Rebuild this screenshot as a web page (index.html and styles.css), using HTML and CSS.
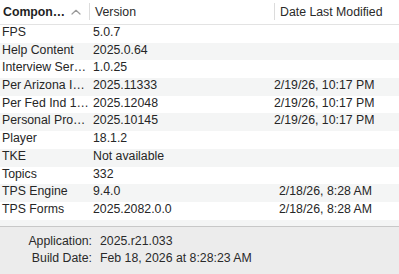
FILE: index.html
```html
<!DOCTYPE html>
<html>
<head>
<meta charset="utf-8">
<link rel="stylesheet" href="styles.css">
</head>
<body>
<div class="window">
  <div class="table">
    <div class="head">
      <div class="hcell first"><span class="hlabel bold">Compon…</span><svg class="chev" width="10" height="6" viewBox="0 0 10 6"><path d="M1 5 L5 1.3 L9 5" fill="none" stroke="#9a9a9a" stroke-width="1.2" stroke-linecap="round" stroke-linejoin="round"/></svg></div>
      <div class="hcell sep"><span class="hlabel">Version</span></div>
      <div class="hcell sep"><span class="hlabel">Date Last Modified</span></div>
    </div>
    <div class="rows">
      <div class="row"><span class="c1">FPS</span><span class="c2">5.0.7</span><span class="c3"></span></div>
      <div class="row alt"><span class="c1">Help Content</span><span class="c2">2025.0.64</span><span class="c3"></span></div>
      <div class="row"><span class="c1">Interview Ser…</span><span class="c2">1.0.25</span><span class="c3"></span></div>
      <div class="row alt"><span class="c1">Per Arizona I…</span><span class="c2">2025.11333</span><span class="c3">2/19/26, 10:17 PM</span></div>
      <div class="row"><span class="c1">Per Fed Ind 1…</span><span class="c2">2025.12048</span><span class="c3">2/19/26, 10:17 PM</span></div>
      <div class="row alt"><span class="c1">Personal Pro…</span><span class="c2">2025.10145</span><span class="c3">2/19/26, 10:17 PM</span></div>
      <div class="row"><span class="c1">Player</span><span class="c2">18.1.2</span><span class="c3"></span></div>
      <div class="row alt"><span class="c1">TKE</span><span class="c2">Not available</span><span class="c3"></span></div>
      <div class="row"><span class="c1">Topics</span><span class="c2">332</span><span class="c3"></span></div>
      <div class="row alt"><span class="c1">TPS Engine</span><span class="c2">9.4.0</span><span class="c3">2/18/26, 8:28 AM</span></div>
      <div class="row"><span class="c1">TPS Forms</span><span class="c2">2025.2082.0.0</span><span class="c3">2/18/26, 8:28 AM</span></div>
      <div class="row alt filler"></div>
    </div>
  </div>
  <div class="info">
    <span class="label">Application:</span><span class="value">2025.r21.033</span>
    <span class="label">Build Date:</span><span class="value">Feb 18, 2026 at 8:28:23 AM</span>
  </div>
</div>
</body>
</html>
```

FILE: styles.css
```css
* { box-sizing: border-box; }
html, body { margin: 0; padding: 0; }
body {
  width: 399px;
  height: 274px;
  overflow: hidden;
  font-family: "Liberation Sans", Arial, sans-serif;
  font-size: 12.3px;
  color: #262626;
  background: #ececec;
}
.window {
  display: flex;
  flex-direction: column;
  height: 274px;
}
.table {
  height: 226px;
  background: #ffffff;
  overflow: hidden;
  display: flex;
  flex-direction: column;
}
.head {
  display: grid;
  grid-template-columns: 89px 185px 1fr;
  height: 25px;
  border-bottom: 1px solid #e3e3e3;
  flex: none;
}
.hcell {
  display: flex;
  align-items: center;
  padding-bottom: 1px;
}
.hcell.first {
  padding-left: 3px;
  padding-right: 8px;
  justify-content: space-between;
}
.hcell.sep::before {
  content: "";
  width: 1px;
  height: 17px;
  background: #dcdcdc;
  margin-right: 5px;
}
.hlabel { color: #2a2a2a; }
.bold { font-weight: bold; color: #1f1f1f; }
.chev { display: block; margin-top: 1px; }
.rows {
  display: flex;
  flex-direction: column;
}
.row {
  display: grid;
  grid-template-columns: 89px 185px 1fr;
  height: 17.7px;
  line-height: 14.6px;
  flex: none;
}
.row.alt { background: #f4f5f5; }
.c1 { padding-left: 2px; white-space: nowrap; overflow: hidden; }
.c2 { padding-left: 4px; white-space: nowrap; }
.c3 { text-align: right; padding-right: 27px; white-space: nowrap; }
.info {
  flex: 1;
  border-top: 1px solid #c8c8c8;
  background: #ececec;
  display: grid;
  grid-template-columns: 92px 1fr;
  grid-auto-rows: 17px;
  column-gap: 8px;
  align-content: start;
  padding-top: 6px;
  line-height: 17px;
  color: #2a2a2a;
}
.label { text-align: right; }
```
